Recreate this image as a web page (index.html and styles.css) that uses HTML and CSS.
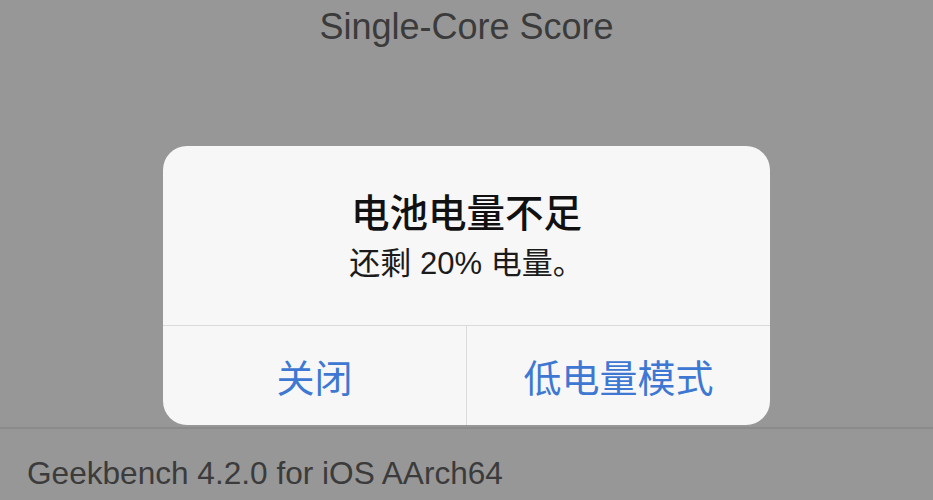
FILE: index.html
```html
<!DOCTYPE html>
<html lang="zh-CN">
<head>
    <meta charset="UTF-8">
    <meta name="viewport" content="width=device-width, initial-scale=1">
    <title>Geekbench</title>
    <link rel="stylesheet" href="styles.css">
</head>
<body>
<div class="screen">
    <div class="score-title">Single-Core Score</div>

    <div class="alert">
        <div class="alert-body">
            <div class="alert-title">电池电量不足</div>
            <div class="alert-message">还剩 20% 电量。</div>
        </div>
        <div class="alert-actions">
            <div class="alert-button">关闭</div>
            <div class="alert-button">低电量模式</div>
        </div>
    </div>

    <div class="divider"></div>
    <div class="footer">Geekbench 4.2.0 for iOS AArch64</div>
</div>
</body>
</html>
```

FILE: styles.css
```css
* {
    margin: 0;
    padding: 0;
    box-sizing: border-box;
}

html,
body {
    width: 100%;
    height: 100%;
}

body {
    background: #979797;
    font-family: "Liberation Sans", "Noto Sans CJK SC", sans-serif;
    overflow: hidden;
}

.screen {
    display: flex;
    flex-direction: column;
    height: 100%;
}

.score-title {
    padding-top: 3px;
    height: 51px;
    line-height: 48px;
    font-size: 36px;
    color: #3b3b3b;
    text-align: center;
}

.alert {
    align-self: center;
    width: 607px;
    height: 279px;
    margin-top: 95px;
    background: #f7f7f7;
    border-radius: 24px;
    display: flex;
    flex-direction: column;
    overflow: hidden;
}

.alert-body {
    height: 180px;
    padding-top: 46px;
    text-align: center;
    border-bottom: 1px solid #dadada;
}

.alert-title {
    font-size: 38.5px;
    line-height: 44px;
    font-weight: 500;
    color: #111111;
}

.alert-message {
    margin-top: 9px;
    font-size: 31px;
    line-height: 38px;
    color: #1b1b1b;
}

.alert-actions {
    flex: 1;
    display: flex;
}

.alert-button {
    flex: 1;
    display: flex;
    justify-content: center;
    align-items: center;
    font-size: 38px;
    color: #3e78d2;
}

.alert-button + .alert-button {
    border-left: 1px solid #dadada;
}

.divider {
    height: 2px;
    margin-top: 2px;
    background: #8b8b8b;
}

.footer {
    padding: 24px 0 0 27px;
    font-size: 31.6px;
    line-height: 40px;
    color: #3b3b3b;
}
```
